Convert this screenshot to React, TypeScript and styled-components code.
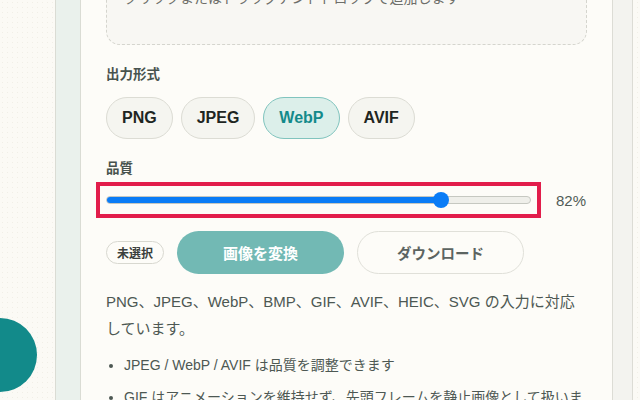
import React from 'react';
import styled, {createGlobalStyle} from "styled-components";

const GlobalStyle = createGlobalStyle`
  html, body {
    margin: 0;
    padding: 0;
    height: 100%;
    overflow: hidden;
  }
  body {
    font-family: "Liberation Sans", "Noto Sans CJK JP", sans-serif;
    background-color: #fbfaf5;
    background-image: radial-gradient(#f1efe7 0.7px, transparent 0.8px);
    background-size: 5px 5px;
    color: #4d5853;
  }
`

const formats = ["PNG", "JPEG", "WebP", "AVIF"]

export default function App() {
    const quality = 82
    const min = 10
    const max = 100
    const ratio = (quality - min) / (max - min)

    return (
        <>
            <GlobalStyle/>
            <PageStyled>
                <GutterStyled/>
                <RailStyled/>
                <CardStyled>
                    <DropZoneStyled>
                        <DropHintStyled>クリックまたはドラッグアンドドロップで追加します</DropHintStyled>
                    </DropZoneStyled>

                    <LabelStyled>出力形式</LabelStyled>
                    <FormatRowStyled>
                        {formats.map(f => (
                            <FormatButtonStyled key={f} $active={f === "WebP"}>{f}</FormatButtonStyled>
                        ))}
                    </FormatRowStyled>

                    <LabelStyled $top={20}>品質</LabelStyled>
                    <QualityRowStyled>
                        <HighlightStyled>
                            <SliderStyled>
                                <TrackStyled>
                                    {/* fill goes to the thumb centre */}
                                    <FillStyled style={{width: `calc(8px + (100% - 16px) * ${ratio})`}}/>
                                </TrackStyled>
                                <ThumbStyled style={{left: `calc((100% - 16px) * ${ratio})`}}/>
                            </SliderStyled>
                        </HighlightStyled>
                        <PercentStyled>{quality}%</PercentStyled>
                    </QualityRowStyled>

                    <ActionRowStyled>
                        <BadgeStyled>未選択</BadgeStyled>
                        <PrimaryButtonStyled>画像を変換</PrimaryButtonStyled>
                        <SecondaryButtonStyled>ダウンロード</SecondaryButtonStyled>
                    </ActionRowStyled>

                    <ParagraphStyled>
                        PNG、JPEG、WebP、BMP、GIF、AVIF、HEIC、SVG の入力に対応しています。
                    </ParagraphStyled>
                    <ListStyled>
                        <li>JPEG / WebP / AVIF は品質を調整できます</li>
                        <li>GIF はアニメーションを維持せず、先頭フレームを静止画像として扱います</li>
                    </ListStyled>
                </CardStyled>
                <SideRailStyled/>
            </PageStyled>
            <FabStyled/>
        </>
    );
}

const PageStyled = styled.div`
  display: flex;
  height: 100vh;
`

const GutterStyled = styled.div`
  width: 55px;
  flex-shrink: 0;
`

const RailStyled = styled.div`
  width: 24px;
  flex-shrink: 0;
  border-left: 1px solid #dadcd4;
  border-right: 1px solid #dadcd4;
  background-color: #eaf1ec;
  background-image: radial-gradient(#dbe8e1 0.6px, transparent 0.7px);
  background-size: 6px 6px;
`

const CardStyled = styled.div`
  width: 481px;
  flex-shrink: 0;
  padding: 0 25px;
  background: #fdfcf8;
  display: flex;
  flex-direction: column;
`

const SideRailStyled = styled.div`
  width: 19px;
  flex-shrink: 0;
  border-left: 1px solid #dcdcd5;
  border-right: 1px solid #dcdcd5;
  background: #f3f3ef;
`

const DropZoneStyled = styled.div`
  margin-top: -70px;
  padding: 57px 18px 36px 17px;
  border: 1px dashed #d5d5ce;
  border-radius: 14px;
  background: #f8f7f3;
`

const DropHintStyled = styled.div`
  font-size: 14px;
  line-height: 20px;
  color: #6e6f6a;
`

const LabelStyled = styled.div<{ $top?: number }>`
  margin-top: ${p => p.$top ?? 20}px;
  font-size: 13.5px;
  line-height: 20px;
  font-weight: 700;
  color: #48534e;
`

const FormatRowStyled = styled.div`
  display: flex;
  gap: 8px;
  margin-top: 12px;
`

const FormatButtonStyled = styled.button<{ $active?: boolean }>`
  height: 42px;
  padding: 0 15px;
  border-radius: 21px;
  font-family: inherit;
  font-size: 16px;
  font-weight: 700;
  border: 1px solid ${p => p.$active ? "#80c4be" : "#dcdcd4"};
  background: ${p => p.$active ? "#dcefea" : "#f5f5f0"};
  color: ${p => p.$active ? "#138a8a" : "#1e2522"};
  cursor: pointer;
`

const QualityRowStyled = styled.div`
  display: flex;
  align-items: center;
  margin-top: 3px;
`

const HighlightStyled = styled.div`
  flex: 1;
  margin-left: -10px;
  padding: 4px 6px;
  border: 4px solid #e21d4b;
`

const SliderStyled = styled.div`
  position: relative;
  height: 20px;
  display: flex;
  align-items: center;
`

const TrackStyled = styled.div`
  position: relative;
  width: 100%;
  height: 8px;
  box-sizing: border-box;
  border: 1px solid #c6c8c1;
  border-radius: 4px;
  background: #efefea;
  overflow: hidden;
`

const FillStyled = styled.div`
  position: absolute;
  left: -1px;
  top: -1px;
  bottom: -1px;
  background: #0a7cf6;
  border-radius: 4px 0 0 4px;
`

const ThumbStyled = styled.div`
  position: absolute;
  top: 2px;
  width: 16px;
  height: 16px;
  border-radius: 50%;
  background: #0a7cf6;
`

const PercentStyled = styled.div`
  width: 31px;
  margin-left: 15px;
  font-size: 15px;
  color: #505b56;
`

const ActionRowStyled = styled.div`
  display: flex;
  align-items: center;
  gap: 13px;
  margin-top: 13px;
`

const BadgeStyled = styled.span`
  height: 23px;
  box-sizing: border-box;
  padding: 0 10px;
  display: inline-flex;
  align-items: center;
  border: 1px solid #d8d8d0;
  border-radius: 12px;
  font-size: 12px;
  font-weight: 700;
  color: #3b3f3d;
`

const PrimaryButtonStyled = styled.button`
  width: 167px;
  height: 43px;
  border: none;
  border-radius: 22px;
  background: #72b9b4;
  color: #fff;
  font-family: inherit;
  font-size: 15px;
  font-weight: 700;
  cursor: pointer;
`

const SecondaryButtonStyled = styled.button`
  width: 167px;
  height: 43px;
  border: 1px solid #e0e0d9;
  border-radius: 22px;
  background: #fdfcf8;
  color: #5c6461;
  font-family: inherit;
  font-size: 14.5px;
  font-weight: 700;
  cursor: pointer;
`

const ParagraphStyled = styled.p`
  margin: 14px 0 0;
  font-size: 15px;
  line-height: 27px;
  color: #4d5853;
`

const ListStyled = styled.ul`
  margin: 10px 0 0;
  padding-left: 18px;
  font-size: 14px;
  line-height: 27px;
  color: #4d5853;

  li + li {
    margin-top: 5px;
  }
`

const FabStyled = styled.div`
  position: fixed;
  left: -37px;
  top: 318px;
  width: 74px;
  height: 74px;
  border-radius: 50%;
  background: #128a8a;
`
